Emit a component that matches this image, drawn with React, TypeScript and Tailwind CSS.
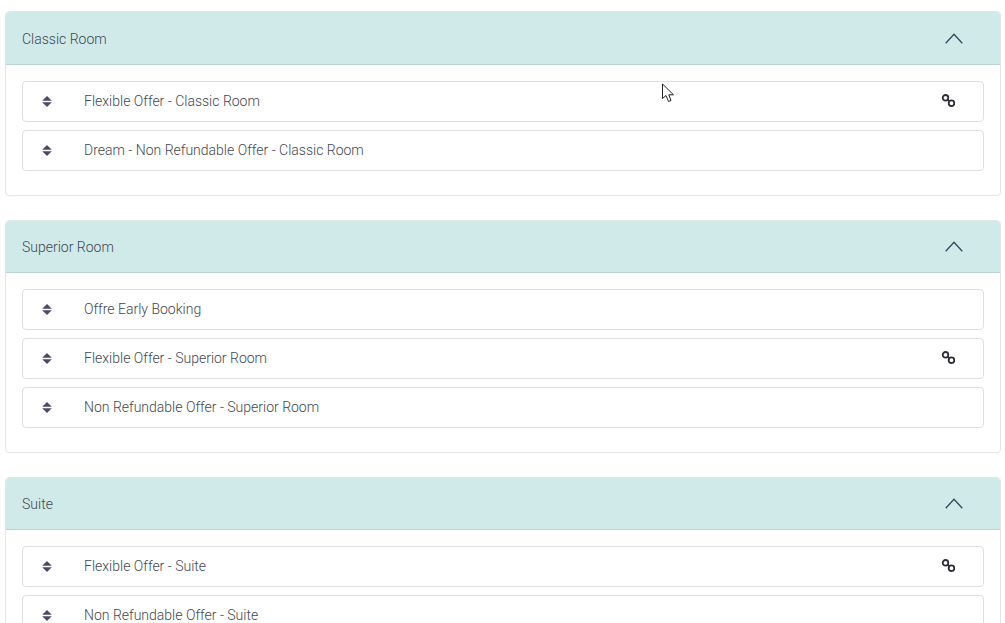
const rooms = [
  {
    name: 'Classic Room',
    headerHeight: 'h-[53px] pt-px',
    offers: [
      { name: 'Flexible Offer - Classic Room', linked: true },
      { name: 'Dream - Non Refundable Offer - Classic Room', linked: false },
    ],
  },
  {
    name: 'Superior Room',
    headerHeight: 'h-[52px]',
    offers: [
      { name: 'Offre Early Booking', linked: false },
      { name: 'Flexible Offer - Superior Room', linked: true },
      { name: 'Non Refundable Offer - Superior Room', linked: false },
    ],
  },
  {
    name: 'Suite',
    headerHeight: 'h-[52px]',
    offers: [
      { name: 'Flexible Offer - Suite', linked: true },
      { name: 'Non Refundable Offer - Suite', linked: false },
    ],
  },
];

function SortIcon() {
  return (
    <svg width="10" height="11" viewBox="0 0 10 11" className="shrink-0">
      <path d="M5 0 L9.8 4.7 H0.2 Z" fill="#4a4a68" />
      <path d="M0.2 6.3 H9.8 L5 11 Z" fill="#4a4a68" />
    </svg>
  );
}

function LinkIcon() {
  return (
    <svg width="14" height="13" viewBox="0 0 14 13" fill="none" stroke="#2d2d38" strokeWidth="1.8" className="-translate-y-px">
      <circle cx="4.5" cy="3.8" r="2.8" />
      <circle cx="10.5" cy="9.2" r="2.8" />
      <path d="M6.5 5.6 L8.5 7.4" />
    </svg>
  );
}

function ChevronIcon() {
  return (
    <svg width="18" height="11" viewBox="0 0 18 11" fill="none" stroke="#3a4660" strokeWidth="1.3">
      <path d="M0.7 10.3 L9 1.2 L17.3 10.3" />
    </svg>
  );
}

function Cursor() {
  return (
    <svg
      width="14"
      height="21"
      viewBox="0 0 14 21"
      className="absolute left-[661px] top-[83px]"
      fill="#ffffff"
      stroke="#222222"
      strokeWidth="1"
    >
      <path d="M1.5 1 V15.5 L5 12.5 L7.5 18.5 L10 17.5 L7.8 11.8 H12.5 Z" />
    </svg>
  );
}

export default function App() {
  return (
    <main className="relative h-screen overflow-hidden bg-white pl-[5px] pr-1 pt-[11px] font-['Roboto',sans-serif] text-sm font-light text-[#3f4752]">
      <div className="flex flex-col gap-6">
        {rooms.map((room) => (
          <section key={room.name} className="rounded border border-[#e3e6e8] bg-white">
            <div
              className={`flex items-center justify-between rounded-t border-b border-[#b9d3d3] bg-[#d0eaea] pl-4 pr-[37px] ${room.headerHeight}`}
            >
              <span>{room.name}</span>
              <ChevronIcon />
            </div>
            <div className="flex flex-col gap-2 p-4 pb-6">
              {room.offers.map((offer) => (
                <div
                  key={offer.name}
                  className="flex h-[41px] items-center rounded border border-[#dcdfe2] bg-white pl-[19px] pr-7"
                >
                  <SortIcon />
                  <span className="ml-8 flex-1 -translate-y-px">{offer.name}</span>
                  {offer.linked && <LinkIcon />}
                </div>
              ))}
            </div>
          </section>
        ))}
      </div>
      <Cursor />
    </main>
  );
}
